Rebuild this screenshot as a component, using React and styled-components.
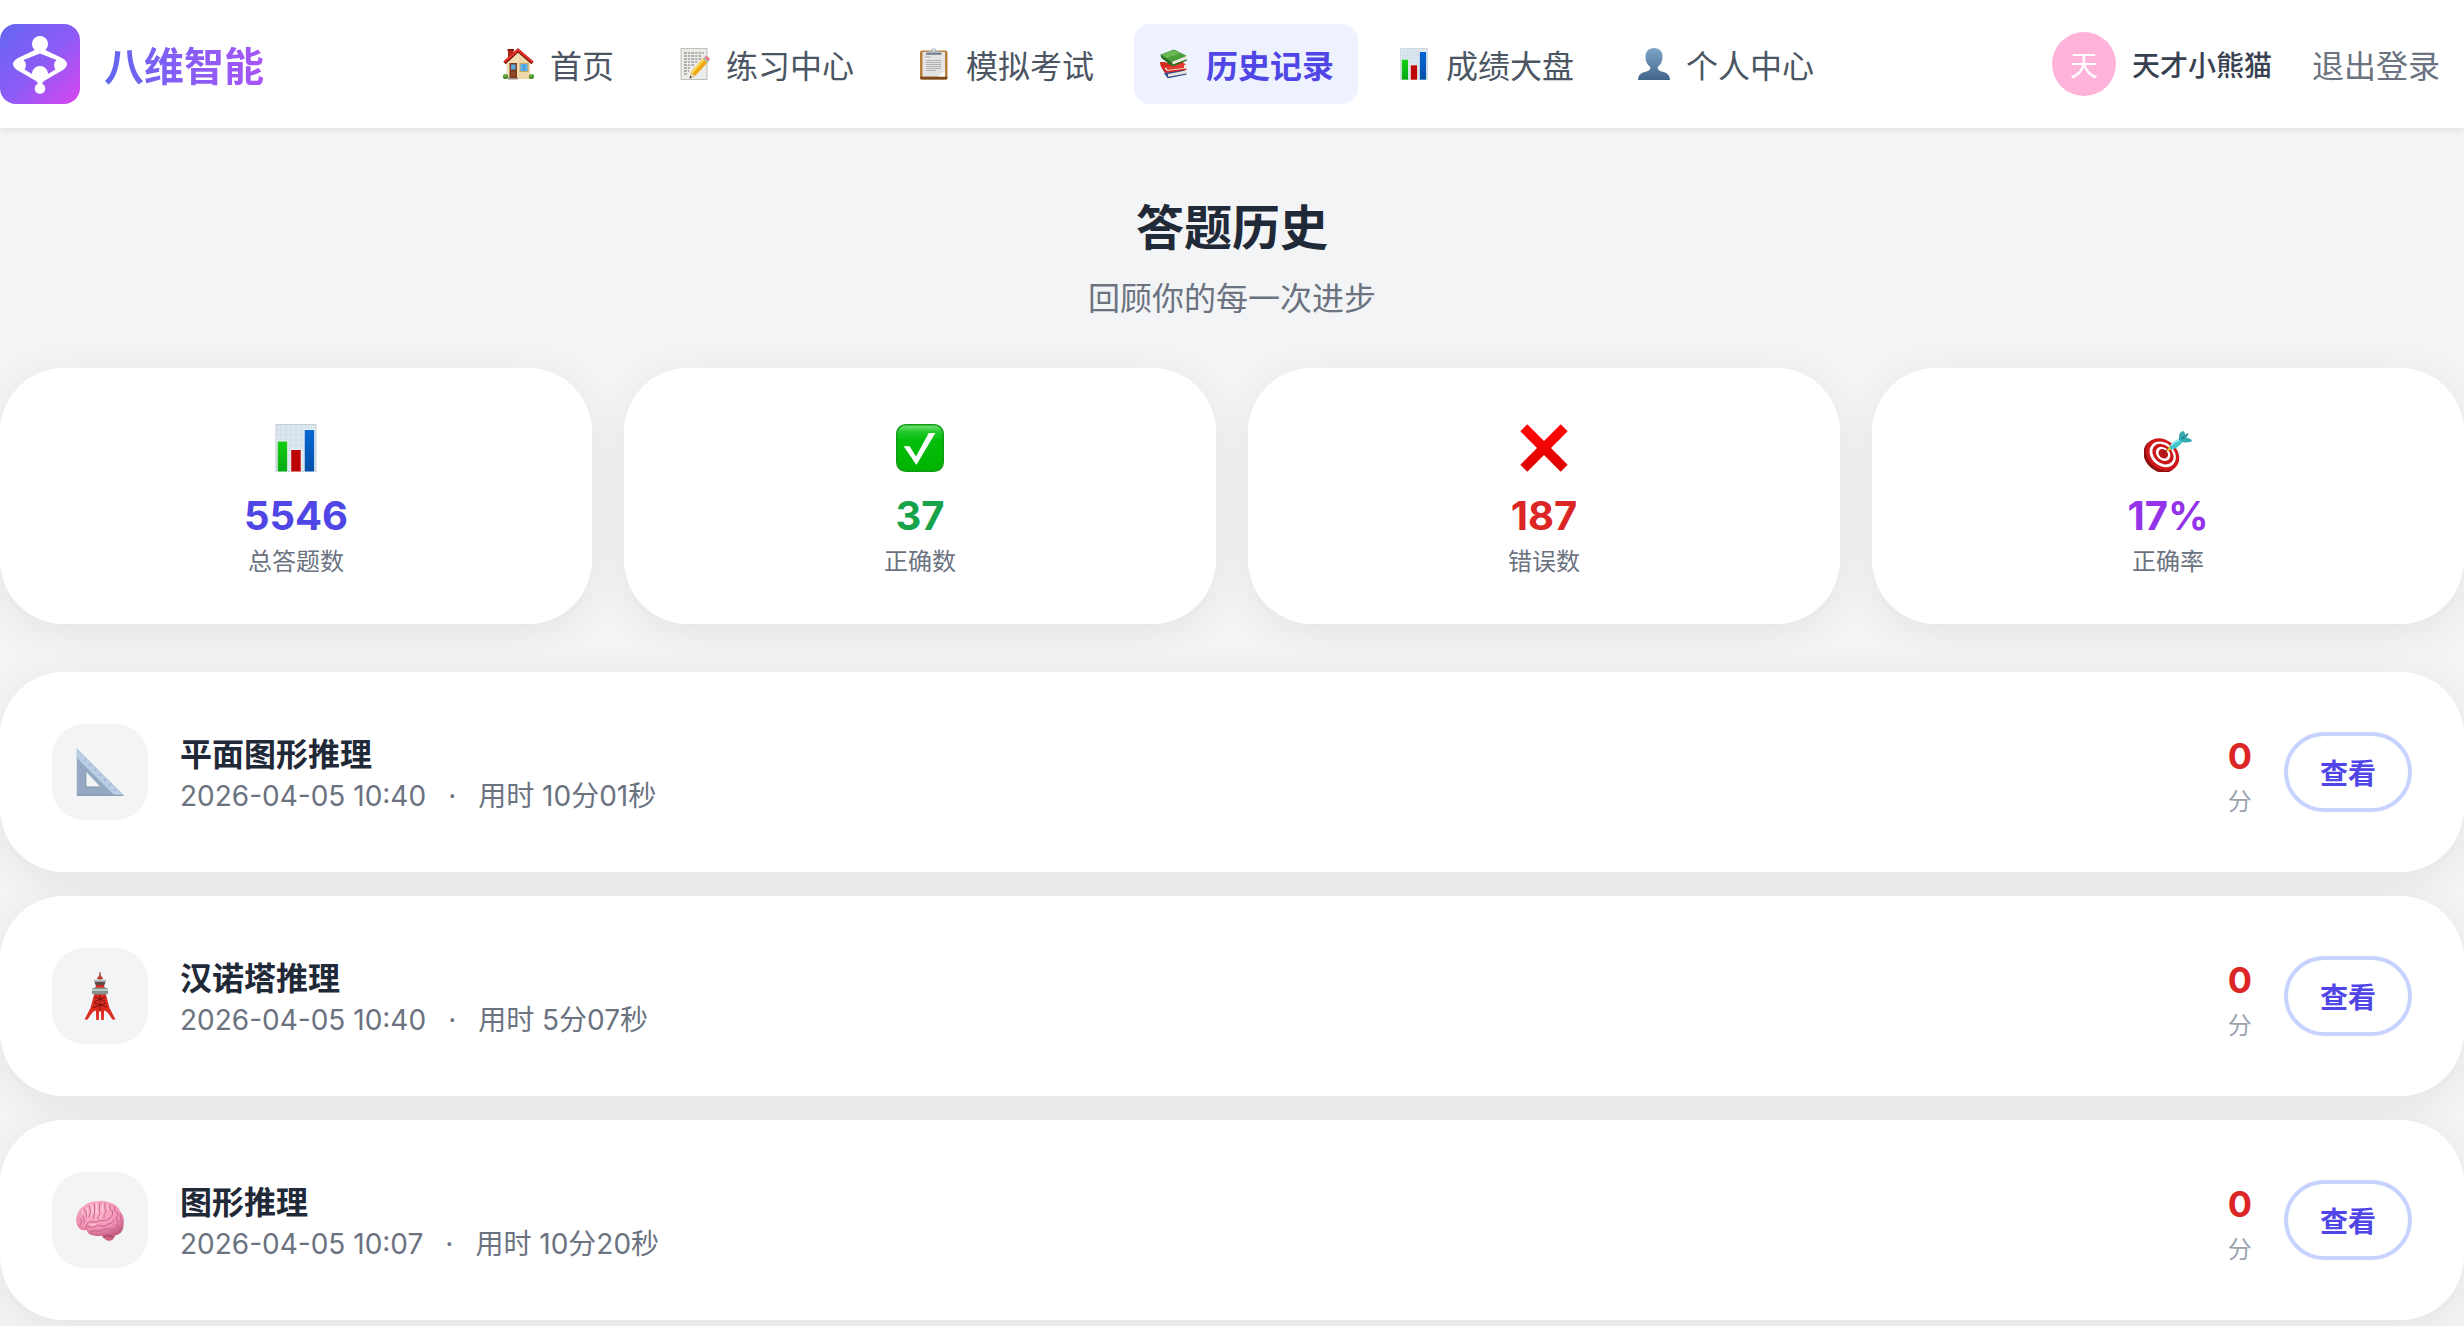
import React from "react";
import styled, { createGlobalStyle } from "styled-components";

const GlobalStyle = createGlobalStyle`
  *, *::before, *::after { box-sizing: border-box; }
  body {
    margin: 0;
    background: #f3f4f6;
    color: #1f2937;
    font-family: "Noto Sans CJK SC", Inter, sans-serif;
    font-size: 32px;
    line-height: 48px;
    -webkit-font-smoothing: antialiased;
  }
  h1, h2, p, ul, dl, dd { margin: 0; padding: 0; }
  a { color: inherit; text-decoration: none; }
  button { font: inherit; cursor: pointer; }
`;

const numeric = `font-family: Inter, "Noto Sans CJK SC", sans-serif;`;

const Page = styled.div`
  min-height: 100vh;
  overflow-x: hidden;
`;

const Header = styled.header`
  position: relative;
  display: flex;
  align-items: center;
  justify-content: space-between;
  height: 128px;
  background: #fff;
  box-shadow: 0 2px 6px rgba(0, 0, 0, 0.08);
`;

const Brand = styled.a`
  display: flex;
  align-items: center;
  gap: 24px;
`;

const BrandMark = styled.svg`
  width: 80px;
  height: 80px;
  display: block;
`;

const BrandName = styled.span`
  font-size: 40px;
  line-height: 56px;
  font-weight: 700;
  background: linear-gradient(90deg, #6366f1, #a855f7);
  background-clip: text;
  color: transparent;
`;

const Nav = styled.nav`
  display: flex;
  gap: 16px;
`;

const NavLink = styled.a`
  display: flex;
  align-items: center;
  gap: 16px;
  height: 80px;
  padding: 0 24px;
  border-radius: 16px;
  white-space: nowrap;
  color: ${(p) => (p.$active ? "#4f46e5" : "#4b5563")};
  background: ${(p) => (p.$active ? "#eef2ff" : "transparent")};
  font-weight: ${(p) => (p.$active ? 600 : 400)};
`;

const Glyph = styled.svg`
  width: ${(p) => p.$size}px;
  height: ${(p) => p.$size}px;
  display: block;
  flex: none;
`;

const Account = styled.div`
  display: flex;
  align-items: center;
  gap: 16px;
`;

const Avatar = styled.span`
  display: grid;
  place-items: center;
  width: 64px;
  height: 64px;
  border-radius: 50%;
  background: #ffb3d9;
  color: #fff;
  font-size: 28px;
  line-height: 40px;
`;

const UserName = styled.span`
  font-size: 28px;
  line-height: 40px;
  font-weight: 500;
  color: #374151;
`;

const LogoutButton = styled.button`
  padding: 16px 24px;
  border: 0;
  background: none;
  color: #6b7280;
`;

const Main = styled.main`
  padding-top: 64px;
`;

const Heading = styled.div`
  display: flex;
  flex-direction: column;
  gap: 16px;
  text-align: center;
`;

const Title = styled.h1`
  font-size: 48px;
  line-height: 64px;
  font-weight: 700;
`;

const Subtitle = styled.p`
  color: #6b7280;
`;

const Stats = styled.dl`
  display: grid;
  grid-template-columns: repeat(4, 1fr);
  gap: 32px;
  margin-top: 48px;
`;

const Card = styled.div`
  background: #fff;
  border-radius: 64px;
  box-shadow: 0 8px 40px rgba(0, 0, 0, 0.07);
`;

const StatCard = styled(Card)`
  display: flex;
  flex-direction: column;
  align-items: center;
  padding: 48px;
`;

const StatIcon = styled.div`
  padding: 8px 0;
  margin-bottom: 8px;
`;

const StatValue = styled.dd`
  order: 1;
  ${numeric}
  font-size: 40px;
  line-height: 56px;
  font-weight: 700;
  color: ${(p) => p.$color};
`;

const StatLabel = styled.dt`
  order: 2;
  font-size: 24px;
  line-height: 32px;
  color: #6b7280;
`;

const Records = styled.ul`
  display: flex;
  flex-direction: column;
  gap: 24px;
  margin-top: 48px;
  list-style: none;
`;

const Record = styled(Card)`
  display: flex;
  align-items: center;
  gap: 32px;
  padding: 52px;
`;

const RecordIcon = styled.div`
  display: grid;
  place-items: center;
  width: 96px;
  height: 96px;
  border-radius: 32px;
  background: #f3f4f6;
`;

const RecordBody = styled.div`
  flex: 1;
  min-width: 0;
`;

const RecordTitle = styled.h2`
  font-size: 32px;
  line-height: 48px;
  font-weight: 600;
`;

const RecordMeta = styled.p`
  display: flex;
  gap: 22px;
  ${numeric}
  font-size: 28px;
  line-height: 40px;
  color: #6b7280;
`;

const Score = styled.p`
  display: flex;
  flex-direction: column;
  align-items: center;
`;

const ScoreValue = styled.strong`
  ${numeric}
  font-size: 36px;
  line-height: 56px;
  font-weight: 700;
  color: #dc2626;
`;

const ScoreUnit = styled.span`
  font-size: 24px;
  line-height: 32px;
  color: #9ca3af;
`;

const ViewButton = styled.button`
  padding: 16px 32px;
  border: 4px solid #c7d2fe;
  border-radius: 40px;
  background: #fff;
  color: #4f46e5;
  && {
    font-size: 28px;
    line-height: 40px;
    font-weight: 600;
  }
`;

const Logo = () => (
  <BrandMark viewBox="0 0 80 80" aria-hidden="true">
    <defs>
      <linearGradient id="brand" x1="0" y1="0" x2="1" y2="1">
        <stop offset="0" stopColor="#6366f1" />
        <stop offset="0.5" stopColor="#8b5cf6" />
        <stop offset="1" stopColor="#d946ef" />
      </linearGradient>
    </defs>
    <rect width="80" height="80" rx="16" fill="url(#brand)" />
    <g fill="#fff">
      <circle cx="40" cy="20" r="8" />
      <path
        fillRule="evenodd"
        d="M37 25 L19 33.5 Q13 36.500 13 40 Q13 43 17 46 L36 57 Q38 58 38 61 L42 61 Q42 58 44 57 L63 46 Q67 43 67 40 Q67 36.500 61 33.500 L43 25Z M40 29.500 L56.500 36 Q52 40 55.500 45.500 L48 50 A8 8 0 0 0 32 50 L24.500 45.500 Q28 40 23.500 36Z"
      />
      <circle cx="40" cy="64.500" r="5.300" />
    </g>
  </BrandMark>
);

const HouseIcon = ({ size }) => (
  <Glyph $size={size} viewBox="0 0 32 32" aria-hidden="true">
    <rect x="6" y="1.500" width="5.500" height="10" fill="#b3261c" />
    <rect x="5.500" y="1" width="6.500" height="2" fill="#8a1c14" />
    <path d="M4.500 15 L16 4 L28 15 V31 H4.500Z" fill="#f3dfb5" />
    <path d="M17 5 L28 15 V31 H17Z" fill="#ecd29e" opacity=".6" />
    <path d="M2.500 15 L16 2.500 L30.500 15" fill="none" stroke="#7d130e" strokeWidth="3.200" />
    <path d="M2.300 14 L16 1.600 L30.700 14" fill="none" stroke="#e53328" strokeWidth="2.200" />
    <rect x="6" y="29.500" width="10" height="2" fill="#9a9186" />
    <rect x="7.500" y="15" width="7.500" height="15" fill="#7a3b1d" />
    <rect x="9" y="16.500" width="4.500" height="5" fill="#5aaae6" />
    <rect x="9" y="23.500" width="4.500" height="5" fill="#8f4a27" />
    <rect x="17.500" y="15" width="9" height="9" fill="#c7a66b" />
    <rect x="18.500" y="16" width="7" height="7" fill="#5cb3ee" />
    <path d="M22 16v7" stroke="#3b82bd" strokeWidth=".8" />
    <circle cx="3.500" cy="28.500" r="2.600" fill="#4d8f2f" />
    <circle cx="29.500" cy="28.500" r="2.600" fill="#4d8f2f" />
    <circle cx="3" cy="27.500" r="1.200" fill="#79b94b" />
    <circle cx="29" cy="27.500" r="1.200" fill="#79b94b" />
  </Glyph>
);

const MemoIcon = ({ size }) => (
  <Glyph $size={size} viewBox="0 0 32 32" aria-hidden="true">
    <rect x="3" y=".5" width="26" height="31" fill="#ebebe9" stroke="#bfbfbb" strokeWidth="1" />
    <g stroke="#747474" strokeWidth="1.100" strokeDasharray="3 1 2 1.200" fill="none">
      <path d="M6 5h20M6 8h18M6 11h17M6 14h14M6 17h11M6 20h7M6 23h5M6 26h4" />
    </g>
    <path d="M11.500 30.500 L13 24 L17 28Z" fill="#e8c79a" />
    <path d="M11.500 30.500 L12.200 27.800 L14 29.400Z" fill="#333" />
    <path d="M13 24 L25 10.500 L29.500 14.500 L17 28Z" fill="#efa912" />
    <path d="M13 24 L25 10.500 L26.600 12 L14.500 25.500Z" fill="#fbd757" />
    <path d="M25 10.500 L26.500 9 L31 13 L29.500 14.500Z" fill="#a9b4bd" />
    <path d="M26.500 9 Q28.500 7.500 30.500 9.500 Q32.300 11.500 31 13Z" fill="#ea6873" />
  </Glyph>
);

const ClipboardIcon = ({ size }) => (
  <Glyph $size={size} viewBox="0 0 32 32" aria-hidden="true">
    <rect x="2" y="2.500" width="27.500" height="29" rx="2" fill="#b9803c" />
    <rect x="2" y="28.500" width="27.500" height="3" rx="1.500" fill="#7b4a1d" />
    <rect x="4.500" y="4" width="22.500" height="24.500" fill="#e4e4e3" />
    <path d="M20 28.500 L27 22 V28.500Z" fill="#fafafa" />
    <g stroke="#b0b0b0" strokeWidth="1">
      <path d="M7 9h6M8 12.500h15M8 14.500h15M8 16.500h15M8 18.500h15M8 20.500h15M8 22.500h10" />
    </g>
    <path d="M9 3.500 Q13 3.500 13.500 1.500 Q15.700 -.8 18 1.500 Q18.500 3.500 22.500 3.500 L23.500 6 H8Z" fill="#aab5bf" />
    <rect x="8" y="5" width="15.500" height="1.800" fill="#74808b" />
    <circle cx="15.700" cy="2.300" r="1" fill="#fff" />
  </Glyph>
);

const BooksIcon = ({ size }) => (
  <Glyph $size={size} viewBox="0 0 32 32" aria-hidden="true">
    <path d="M5 22 L24 19 L28.500 25 L10 29Z" fill="#28509b" />
    <path d="M10 26 L28 22.500 L28.500 25.500 L10 29Z" fill="#e9e5dc" />
    <path d="M6.500 25 L10 29.500 L28.500 26" fill="none" stroke="#1f3f82" strokeWidth="1.200" />
    <path d="M3 16 L22 12 L28.500 17 L9 21Z" fill="#c92a20" />
    <path d="M8 20 L28 16.500 L28 21 L8.500 24.500Z" fill="#f0ece2" />
    <path d="M2 14 Q1.500 18.500 7.500 25 L28.500 22 V20.500 L8.500 23 Q5 18 8 14Z" fill="#d5281e" />
    <path d="M9 18 L26 15 L26 20 L9 22Z" fill="#e33a2d" />
    <path d="M2.500 6.500 L16 1.500 L29 8 L14 14Z" fill="#4c9e3b" />
    <path d="M4 6.500 L16 2.500 L22 5.500 L9 10Z" fill="#6ab955" />
    <path d="M14 14 L29 8 L28 12 L14.500 17.500Z" fill="#eeeadd" />
    <path d="M2.500 6.500 Q2.500 9 4 10.500 L14.500 18.500 L29 12.500 V11.300 L14.800 16.500 L13.500 13.500Z" fill="#23701f" />
  </Glyph>
);

const ChartIcon = ({ size }) => {
  const id = React.useId();
  return (
    <Glyph $size={size} viewBox="0 0 48 48" aria-hidden="true">
      <defs>
        <linearGradient id={id + "g"} x1="0" y1="0" x2="0" y2="1">
          <stop offset="0" stopColor="#14ce14" />
          <stop offset="1" stopColor="#06aa14" />
        </linearGradient>
        <linearGradient id={id + "b"} x1="0" y1="0" x2="0" y2="1">
          <stop offset="0" stopColor="#0866d6" />
          <stop offset="1" stopColor="#0250a8" />
        </linearGradient>
      </defs>
      <rect x="4" y=".5" width="40" height="47" fill="#dce7f0" stroke="#c5ced6" />
      <path
        d="M9 1v46M14 1v46M19 1v46M24 1v46M29 1v46M34 1v46M39 1v46M4 6h40M4 11h40M4 16h40M4 21h40M4 26h40M4 31h40M4 36h40M4 41h40"
        stroke="#cbd7e3"
        strokeWidth=".6"
      />
      <rect x="5" y="16.500" width="11" height="31.500" fill="#f1f5f5" />
      <rect x="18.500" y="25" width="11" height="23" fill="#f5f1f1" />
      <rect x="32" y="5" width="11" height="43" fill="#eef3f8" />
      <rect x="5.700" y="17.500" width="9.500" height="30" fill={`url(#${id}g)`} />
      <rect x="19.200" y="26" width="9.500" height="21.500" fill="#bd0404" />
      <rect x="32.700" y="6" width="9.500" height="41.500" fill={`url(#${id}b)`} />
    </Glyph>
  );
};

const PersonIcon = ({ size }) => (
  <Glyph $size={size} viewBox="0 0 32 32" aria-hidden="true">
    <defs>
      <linearGradient id="person" x1="0" y1="0" x2="0" y2="1">
        <stop offset="0" stopColor="#7da5c9" />
        <stop offset="1" stopColor="#42658a" />
      </linearGradient>
    </defs>
    <path
      d="M16 0 C10.500 0 7.500 3.500 7.500 9 C7.500 13.500 9.500 17 12.300 18.800 C12.500 21.500 11.500 22.700 8.500 23.400 C3 24.500 .3 26.500 0 32 H32 C31.700 26.500 29 24.500 23.500 23.400 C20.500 22.700 19.500 21.500 19.700 18.800 C22.500 17 24.500 13.500 24.500 9 C24.500 3.500 21.500 0 16 0Z"
      fill="url(#person)"
    />
  </Glyph>
);

const CheckIcon = ({ size }) => (
  <Glyph $size={size} viewBox="0 0 48 48" aria-hidden="true">
    <defs>
      <linearGradient id="check" x1="0" y1="0" x2="0" y2="1">
        <stop offset="0" stopColor="#7be07b" />
        <stop offset=".16" stopColor="#1fc926" />
        <stop offset=".35" stopColor="#04bd0a" />
        <stop offset="1" stopColor="#00b400" />
      </linearGradient>
    </defs>
    <rect x=".8" y=".8" width="46.400" height="46.400" rx="9" fill="url(#check)" stroke="#119b17" strokeWidth="1.600" />
    <path d="M7.700 22.300 H13.700 L20 32.500 L32.800 9 H39.300 L20.400 41Z" fill="#fff" />
  </Glyph>
);

const CrossIcon = ({ size }) => (
  <Glyph $size={size} viewBox="0 0 48 48" aria-hidden="true">
    <defs>
      <linearGradient id="cross" x1="0" y1="0" x2="0" y2="1">
        <stop offset="0" stopColor="#ff0a05" />
        <stop offset="1" stopColor="#dc0000" />
      </linearGradient>
    </defs>
    <path
      d="M.3 7.300 L7.300 .3 L24 17 L40.700 .3 L47.700 7.300 L31 24 L47.700 40.700 L40.700 47.700 L24 31 L7.300 47.700 L.3 40.700 L17 24Z"
      fill="url(#cross)"
    />
  </Glyph>
);

const TargetIcon = ({ size }) => (
  <Glyph $size={size} viewBox="0 0 48 48" aria-hidden="true">
    <g transform="rotate(42 17.500 31)">
      <ellipse cx="17.500" cy="32.300" rx="18.500" ry="15.300" fill="#8e0f12" />
      <ellipse cx="18" cy="30" rx="18.300" ry="14.500" fill="#d0181c" />
      <ellipse cx="18" cy="29.700" rx="14.500" ry="11.400" fill="#fff" />
      <ellipse cx="18" cy="29.400" rx="11.700" ry="9" fill="#c9171b" />
      <ellipse cx="18" cy="29.100" rx="8" ry="6.200" fill="#fff" />
      <ellipse cx="18" cy="28.900" rx="5.200" ry="4.200" fill="#b91418" />
    </g>
    <path d="M19.500 29 L27 22" stroke="#7a1a1a" strokeWidth="1" />
    <path d="M22.500 27.500 L25.500 21.500 L28 25.500Z" fill="#f0bd13" />
    <path d="M25.500 24.500 Q26 19 32 16.500 L39 12.500 L41 15 Q35 23 30 25 Q27 26 25.500 24.500Z" fill="#3fc6cd" />
    <path d="M27 21.500 Q30 18 36 15.500" stroke="#9beef0" strokeWidth="1.500" fill="none" />
    <path d="M35 16 Q34 8 39 7 Q41.500 7.500 41 13 L44.800 9 L42.500 13.800 Q47.500 14.500 48 17 Q45 19.500 38 18Z" fill="#37a9b2" />
    <path d="M37.500 15 L44 9.500" stroke="#177680" strokeWidth="1.200" />
  </Glyph>
);

const RulerIcon = ({ size }) => (
  <Glyph $size={size} viewBox="0 0 48 48" aria-hidden="true">
    <path fillRule="evenodd" d="M.8 .5 L47.800 47.500 H.8Z M9.800 23.500 V39 H24.500Z" fill="#94a9c1" />
    <path d="M.8 .5 L47.800 47.500 H38 L.8 10.500Z" fill="#b8cee3" />
    <path d="M.8 10.500 L38 47.500" stroke="#8fa5bd" strokeWidth="1" />
    <path d="M8 13l2-2M13 18l2.500-2.500M18 23l2-2M23 28l2.500-2.500M28 33l2-2M33 38l2.500-2.500M38 43l2-2" stroke="#8ba5c1" strokeWidth="1" />
    <path d="M.8 47.300H47.500M9.800 23.500V39H24.500" fill="none" stroke="#7d92ab" strokeWidth="1" />
  </Glyph>
);

const TowerIcon = ({ size }) => (
  <Glyph $size={size} viewBox="0 0 48 48" aria-hidden="true">
    <path d="M23.500 0 L24.500 0 L25.500 8 H22.500Z" fill="#9a4b40" />
    <path d="M21 7 L22 4.500 H26 L27 7Z" fill="#c03a2b" />
    <path d="M18.500 8 H29.500 V10 L28 14 H20 L18.500 10Z" fill="#5b4a47" />
    <rect x="18.500" y="7.500" width="11" height="2.200" fill="#c2c6c6" />
    <path d="M20 13 H28 L29 18 H19Z" fill="#d9281c" />
    <path
      d="M18.500 21 H29.500 L33.500 36 L39.500 47.500 H36.500 L32 41 Q30 38.500 28 38.500 L27.800 48 H25.200 L25 39.500 H23 L22.800 48 H20.200 L20 38.500 Q18 38.500 16 41 L11.500 47.500 H8.500 L14.500 36Z"
      fill="#dc2a1e"
    />
    <path d="M19 25 L29 29M29 25 L18 30M18 31 L31 35M30 31 L16.500 36M24 22V38" stroke="#7a150d" strokeWidth="1" />
    <path d="M16 16.500 L19 15.500 H29 L32 16.500 V21.500 L30 22.500 H18 L16 21.500Z" fill="#84918f" />
    <path d="M16 17 H32 V19 H16Z" fill="#bdc9c6" />
  </Glyph>
);

const BrainIcon = ({ size }) => (
  <Glyph $size={size} viewBox="0 0 48 48" aria-hidden="true">
    <defs>
      <radialGradient id="brain" cx=".42" cy=".3" r=".75">
        <stop offset="0" stopColor="#ffb9d1" />
        <stop offset=".65" stopColor="#f291b4" />
        <stop offset="1" stopColor="#c45d82" />
      </radialGradient>
    </defs>
    <path d="M25 37 Q26 42 31 44.500 Q37 46 39 40 L38 34Z" fill="#c9617f" />
    <path
      d="M4 33 Q-1 28 .5 21 Q2 13 8 10 Q13 5 20 5.500 Q27 3.500 33 6.500 Q41 8 44 15 Q49 21 47.500 28 Q48 35 43 38 Q38 41 33 38 Q25 41 18 39.500 Q12 39 10.500 34 Q7 35 4 33Z"
      fill="url(#brain)"
    />
    <g fill="none" stroke="#c2678a" strokeWidth="1" strokeLinecap="round">
      <path d="M10 33 Q9 27 15 25.500 Q21 27 24 24.500 Q30 26 34 22 Q38 19 36 14" />
      <path d="M11 30 Q18 33 22 29 Q28 32 32 28 Q37 28 38 24" />
      <path d="M14 36 Q19 33 24 35.500 Q30 31 36 34 Q41 33 42 28" />
      <path d="M4 29 Q7 26 4 22 M5 18 Q9 21 8 27 M8 13 Q12 16 10 21 M13 10 Q16 15 13 21 M18 8 Q20 14 17 23" />
      <path d="M24 7 Q22 13 24 18 Q21 20 22 23 M29 7 Q28 12 30 16 Q27 19 28 22 M34 9 Q32 12 35 15" />
      <path d="M38 10 Q38 15 42 18 Q39 22 42 26 M44 18 Q44 22 46 27 M42 31 Q44 32 45 35" />
    </g>
    <g fill="none" stroke="#ffd0df" strokeWidth="1" strokeLinecap="round">
      <path d="M6 14 Q7 17 6 19 M11 12 Q13 15 11.500 19 M16 9 Q18 14 15.500 19 M21 8 Q21 12 20 17 M27 8 Q26 12 27 15 M31 9 L33 14 M14 29 Q18 30 20 28" />
    </g>
    <path d="M27 41 Q31 38 37 41" fill="none" stroke="#9e3b5d" strokeWidth="1" />
  </Glyph>
);

const navItems = [
  { label: "首页", Icon: HouseIcon },
  { label: "练习中心", Icon: MemoIcon },
  { label: "模拟考试", Icon: ClipboardIcon },
  { label: "历史记录", Icon: BooksIcon, active: true },
  { label: "成绩大盘", Icon: ChartIcon },
  { label: "个人中心", Icon: PersonIcon },
];

const stats = [
  { label: "总答题数", value: "5546", color: "#4f46e5", Icon: ChartIcon },
  { label: "正确数", value: "37", color: "#16a34a", Icon: CheckIcon },
  { label: "错误数", value: "187", color: "#dc2626", Icon: CrossIcon },
  { label: "正确率", value: "17%", color: "#9333ea", Icon: TargetIcon },
];

const records = [
  { title: "平面图形推理", date: "2026-04-05 10:40", time: "用时 10分01秒", score: 0, Icon: RulerIcon },
  { title: "汉诺塔推理", date: "2026-04-05 10:40", time: "用时 5分07秒", score: 0, Icon: TowerIcon },
  { title: "图形推理", date: "2026-04-05 10:07", time: "用时 10分20秒", score: 0, Icon: BrainIcon },
];

export default function App() {
  return (
    <Page lang="zh-CN">
      <GlobalStyle />
      <Header>
        <Brand href="#home">
          <Logo />
          <BrandName>八维智能</BrandName>
        </Brand>
        <Nav>
          {navItems.map(({ label, Icon, active }) => (
            <NavLink key={label} href="#nav" $active={active} aria-current={active ? "page" : undefined}>
              <Icon size={32} />
              <span>{label}</span>
            </NavLink>
          ))}
        </Nav>
        <Account>
          <Avatar>天</Avatar>
          <UserName>天才小熊猫</UserName>
          <LogoutButton type="button">退出登录</LogoutButton>
        </Account>
      </Header>
      <Main>
        <Heading>
          <Title>答题历史</Title>
          <Subtitle>回顾你的每一次进步</Subtitle>
        </Heading>
        <Stats>
          {stats.map(({ label, value, color, Icon }) => (
            <StatCard key={label}>
              <StatIcon>
                <Icon size={48} />
              </StatIcon>
              <StatLabel>{label}</StatLabel>
              <StatValue $color={color}>{value}</StatValue>
            </StatCard>
          ))}
        </Stats>
        <Records>
          {records.map(({ title, date, time, score, Icon }) => (
            <Record as="li" key={title}>
              <RecordIcon>
                <Icon size={48} />
              </RecordIcon>
              <RecordBody>
                <RecordTitle>{title}</RecordTitle>
                <RecordMeta>
                  <time>{date}</time>
                  <span>·</span>
                  <span>{time}</span>
                </RecordMeta>
              </RecordBody>
              <Score>
                <ScoreValue>{score}</ScoreValue>
                <ScoreUnit>分</ScoreUnit>
              </Score>
              <ViewButton type="button">查看</ViewButton>
            </Record>
          ))}
        </Records>
      </Main>
    </Page>
  );
}
